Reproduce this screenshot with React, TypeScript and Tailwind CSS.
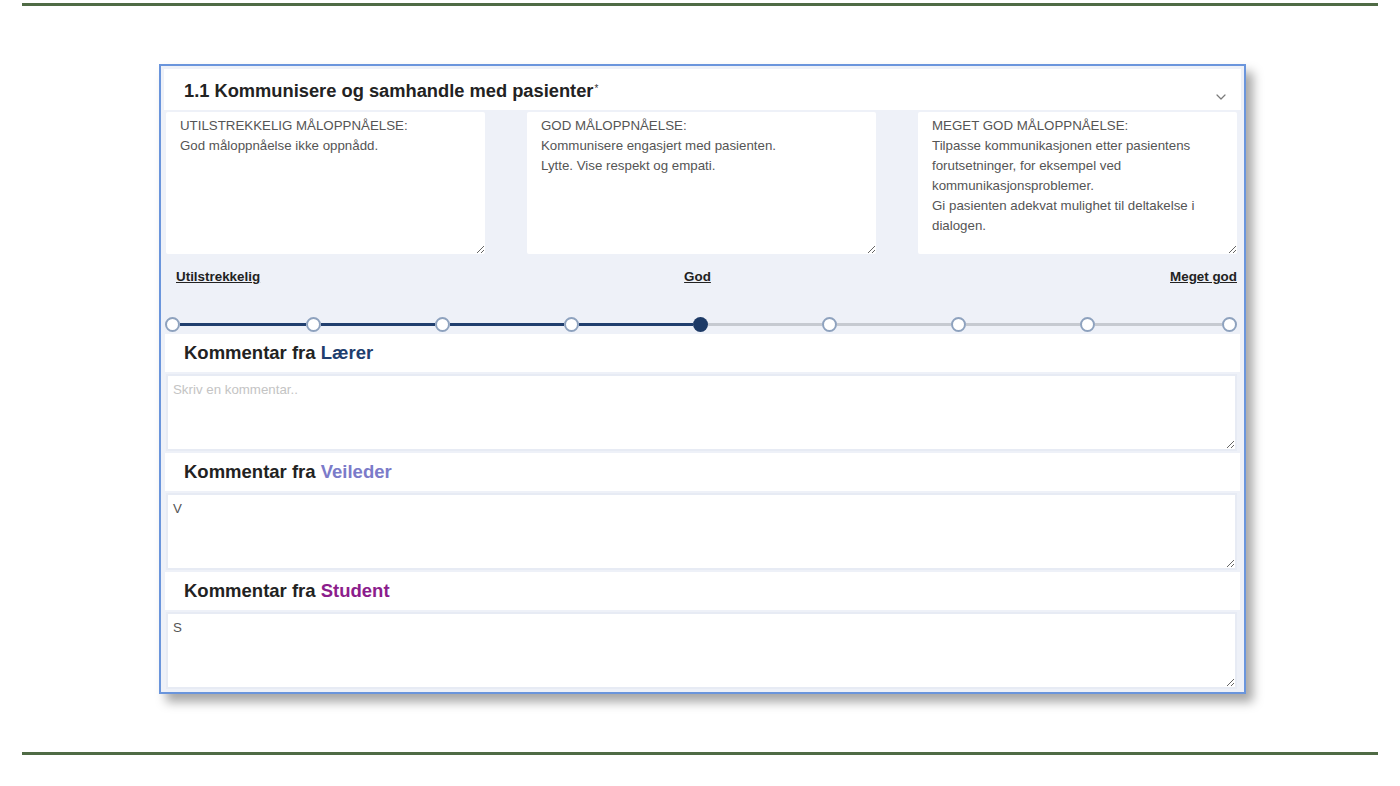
import { ChevronDown } from 'lucide-react';

const font = { fontFamily: "'Liberation Sans', Arial, sans-serif" };

const criteria = [
  {
    width: 'w-[319px]',
    text: 'UTILSTREKKELIG MÅLOPPNÅELSE:\nGod måloppnåelse ikke oppnådd.',
  },
  {
    width: 'w-[349px]',
    text: 'GOD MÅLOPPNÅELSE:\nKommunisere engasjert med pasienten.\nLytte. Vise respekt og empati.',
  },
  {
    width: 'w-[319px]',
    text:
      'MEGET GOD MÅLOPPNÅELSE:\nTilpasse kommunikasjonen etter pasientens\nforutsetninger, for eksempel ved\nkommunikasjonsproblemer.\nGi pasienten adekvat mulighet til deltakelse i\ndialogen.',
  },
];

// 9 steps on the scale, index 4 ("God") is selected
const STEPS = 9;
const SELECTED = 4;

function Slider() {
  const parts: JSX.Element[] = [];
  for (let i = 0; i < STEPS; i++) {
    const active = i === SELECTED;
    parts.push(
      <span
        key={`c${i}`}
        className={
          active
            ? 'w-[15px] h-[15px] rounded-full bg-[#1d3a66] shrink-0'
            : 'w-[15px] h-[15px] rounded-full bg-white border-2 border-[#8ea2be] shrink-0'
        }
      />
    );
    if (i < STEPS - 1) {
      const filled = i < SELECTED;
      const w = i === 0 ? 'w-[126px]' : i === STEPS - 2 ? 'w-[127px]' : 'w-[114px]';
      parts.push(
        <span
          key={`s${i}`}
          className={`${w} h-[3px] shrink-0 ${filled ? 'bg-[#213f6e]' : 'bg-[#c6cad1]'}`}
        />
      );
    }
  }
  return <div className="flex items-center pl-[1px] pt-[18px] h-[37px]">{parts}</div>;
}

function CommentBlock({ who, color, value }: { who: string; color: string; value: string }) {
  return (
    <>
      <div className="h-[38px] bg-white flex items-center pl-[19px] mx-[1px] mt-[2px]">
        <h3 className="text-[18.5px] font-bold text-[#222]">
          Kommentar fra <span className={color}>{who}</span>
        </h3>
      </div>
      <textarea
        readOnly
        defaultValue={value}
        placeholder="Skriv en kommentar.."
        className="mt-[2px] ml-[2px] mr-[4px] h-[77px] bg-white border-2 border-[#e7ebf4] px-[5px] pt-[4px] text-[13.3px] leading-[20px] text-[#555] placeholder:text-[#c4c4c4] outline-none"
      />
    </>
  );
}

export default function App() {
  return (
    <div className="w-[1400px] h-[786px] bg-white flex flex-col pt-[3px]" style={font}>
      <div className="mx-[22px] h-[3px] bg-[#4f6b45]" />

      {/* Kort */}
      <div className="mt-[58px] ml-[159px] w-[1087px] h-[630px] border-2 border-[#6a95dc] bg-[#eef1f8] p-[3px] flex flex-col shadow-[7px_8px_10px_rgba(0,0,0,0.35)]">
        {/* Header */}
        <div className="h-[41px] bg-white flex justify-between pl-[20px] pr-[12px]">
          <h2 className="pt-[12px] text-[18.3px] leading-[20px] font-bold text-[#222]">
            1.1 Kommunisere og samhandle med pasienter
            <sup className="text-[10px] text-[#333] ml-[1px] font-normal">*</sup>
          </h2>
          <ChevronDown size={16} strokeWidth={1.8} className="self-end mb-[5px] text-[#7a7a7a]" />
        </div>

        {/* Kriterier */}
        <div className="flex justify-between mt-[2px] pl-[2px] pr-[4px]">
          {criteria.map((c, i) => (
            <textarea
              key={i}
              readOnly
              defaultValue={c.text}
              className={`${c.width} h-[142px] bg-white rounded-[2px] px-[14px] pt-[4px] text-[13.3px] leading-[20px] text-[#555] outline-none overflow-hidden`}
            />
          ))}
        </div>

        {/* Skala-etiketter */}
        <div className="grid grid-cols-3 h-[44px] items-center pt-[4px] pl-[12px] pr-[4px] text-[13.4px] font-bold text-[#222]">
          <span className="underline">Utilstrekkelig</span>
          <span className="underline text-center pr-[18px]">God</span>
          <span className="underline text-right">Meget god</span>
        </div>

        <Slider />

        {/* Kommentarer */}
        <div className="flex flex-col -mt-[2px]">
          <CommentBlock who="Lærer" color="text-[#1f3e6e]" value="" />
          <CommentBlock who="Veileder" color="text-[#7b7bc9]" value="V" />
          <CommentBlock who="Student" color="text-[#8c1d8c]" value="S" />
        </div>
      </div>

      <div className="mt-[58px] mx-[22px] h-[3px] bg-[#4f6b45]" />
    </div>
  );
}
